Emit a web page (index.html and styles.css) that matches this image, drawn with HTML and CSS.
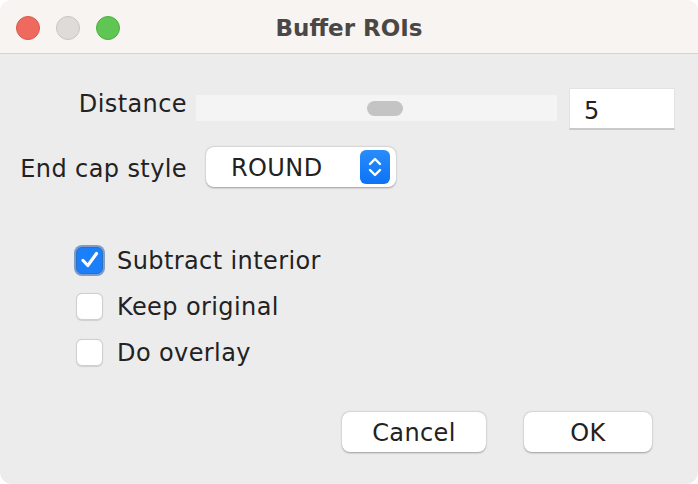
FILE: index.html
```html
<!DOCTYPE html>
<html>
<head>
<meta charset="utf-8">
<link rel="stylesheet" href="styles.css">
</head>
<body>
<div class="window">
  <div class="titlebar">
    <div class="lights">
      <span class="light red"></span>
      <span class="light gray"></span>
      <span class="light green"></span>
    </div>
    <div class="title">Buffer ROIs</div>
  </div>
  <div class="content">
    <div class="row row-distance">
      <div class="label">Distance</div>
      <div class="slider"><span class="thumb"></span></div>
      <div class="field">5</div>
    </div>
    <div class="row row-cap">
      <div class="label">End cap style</div>
      <div class="select">
        <span class="select-text">ROUND</span>
        <span class="stepper">
          <svg width="18" height="26" viewBox="0 0 18 26"><path d="M4 10 L9 5 L14 10" fill="none" stroke="#fff" stroke-width="2.4" stroke-linecap="round" stroke-linejoin="round"/><path d="M4 16 L9 21 L14 16" fill="none" stroke="#fff" stroke-width="2.4" stroke-linecap="round" stroke-linejoin="round"/></svg>
        </span>
      </div>
    </div>
    <div class="checks">
      <div class="check-row">
        <span class="box checked">
          <svg width="22" height="22" viewBox="0 0 22 22"><path d="M4 11.5 L8.8 16.5 L17.5 4.5" fill="none" stroke="#fff" stroke-width="3.2" stroke-linecap="round" stroke-linejoin="round"/></svg>
        </span>
        <span class="check-label">Subtract interior</span>
      </div>
      <div class="check-row">
        <span class="box"></span>
        <span class="check-label">Keep original</span>
      </div>
      <div class="check-row">
        <span class="box"></span>
        <span class="check-label">Do overlay</span>
      </div>
    </div>
    <div class="buttons">
      <div class="btn btn-cancel">Cancel</div>
      <div class="btn btn-ok">OK</div>
    </div>
  </div>
</div>
</body>
</html>
```
FILE: styles.css
```css
html, body {
  margin: 0;
  padding: 0;
  background: #ffffff;
}
body {
  width: 698px;
  height: 484px;
  font-family: "DejaVu Sans", sans-serif;
  color: #222222;
}
.window {
  width: 698px;
  height: 484px;
  border-radius: 12px;
  overflow: hidden;
  background: #ececec;
  display: flex;
  flex-direction: column;
}
.titlebar {
  height: 53px;
  background: #f8f4f1;
  border-bottom: 1px solid #d6d3d1;
  position: relative;
  display: flex;
  align-items: center;
  justify-content: center;
  flex-shrink: 0;
}
.lights {
  position: absolute;
  left: 16px;
  top: 16px;
  display: flex;
  gap: 16px;
}
.light {
  width: 24px;
  height: 24px;
  border-radius: 50%;
  box-sizing: border-box;
}
.red { background: #ee6a5f; border: 1px solid #d9574d; }
.gray { background: #dedcd9; border: 1px solid #c8c5c2; }
.green { background: #5fc553; border: 1px solid #4eae43; }
.title {
  font-weight: bold;
  font-size: 23px;
  color: #4b4746;
  margin-top: 2px;
}
.content {
  display: flex;
  flex-direction: column;
  padding-top: 34px;
  font-size: 24px;
  letter-spacing: 0.4px;
}
.row {
  display: flex;
  align-items: center;
}
.label {
  width: 187px;
  text-align: right;
  white-space: nowrap;
}
.row-distance {
  height: 42px;
}
.row-distance .label {
  margin-top: -11px;
}
.slider {
  margin-left: 9px;
  width: 361px;
  height: 26px;
  background: #f4f4f4;
  display: flex;
  align-items: center;
  justify-content: center;
  margin-top: -2px;
}
.thumb {
  width: 36px;
  height: 15px;
  border-radius: 8px;
  background: #c4c4c4;
  margin-left: 16px;
}
.field {
  margin-left: 12px;
  width: 106px;
  height: 42px;
  box-sizing: border-box;
  background: #fff;
  border: 1px solid #e3e3e3;
  border-bottom: 2px solid #c9c9c9;
  padding-left: 14px;
  display: flex;
  align-items: center;
  padding-top: 4px;
}
.row-cap {
  margin-top: 17px;
  height: 40px;
}
.row-cap .label {
  margin-top: 4px;
}
.select {
  margin-left: 19px;
  width: 190px;
  height: 40px;
  box-sizing: border-box;
  background: #fff;
  border-radius: 8px;
  box-shadow: 0 0.5px 2px rgba(0,0,0,0.35);
  display: flex;
  align-items: center;
  justify-content: space-between;
  padding: 0 6px 0 25px;
}
.select-text {
  margin-top: 2px;
}
.stepper {
  width: 30px;
  height: 34px;
  border-radius: 6px;
  background: linear-gradient(#2a8cfb, #0b74f5);
  display: flex;
  align-items: center;
  justify-content: center;
}
.checks {
  margin-top: 50px;
  padding-left: 76px;
  display: flex;
  flex-direction: column;
}
.check-row {
  height: 46px;
  display: flex;
  align-items: center;
}
.box {
  width: 27px;
  height: 27px;
  box-sizing: border-box;
  border-radius: 6px;
  background: #fff;
  border: 1px solid #cfcfcf;
  box-shadow: 0 0.5px 1px rgba(0,0,0,0.12);
  display: flex;
  align-items: center;
  justify-content: center;
}
.box.checked {
  background: #1a7ff8;
  border: 1px solid #2f6fc0;
  box-shadow: 0 0 0 2px #7d9ccc;
}
.check-label {
  margin-left: 14px;
  margin-top: 2px;
}
.buttons {
  margin-top: 37px;
  display: flex;
  padding-left: 342px;
  gap: 38px;
}
.btn {
  height: 40px;
  box-sizing: border-box;
  background: #fff;
  border-radius: 8px;
  box-shadow: 0 0.5px 2px rgba(0,0,0,0.35);
  display: flex;
  align-items: center;
  justify-content: center;
  padding-top: 2px;
}
.btn-cancel { width: 144px; }
.btn-ok { width: 128px; }
```
